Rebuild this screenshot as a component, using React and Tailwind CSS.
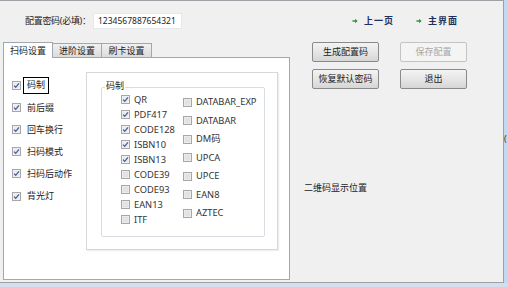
import React from 'react';

const FONT = "font-['Noto_Sans','Noto_Sans_CJK_SC',sans-serif]";

function Box({ checked }) {
  return (
    <svg width="9" height="9" viewBox="0 0 9 9" className="shrink-0">
      <rect x="0.5" y="0.5" width="8" height="8" fill="#f4f4f4" stroke="#a7a7a7" />
      <rect x="1.5" y="1.5" width="6" height="6" fill={checked ? '#e8ecf2' : '#e2e2e2'} />
      {checked && (
        <path d="M2 4.6 L3.7 6.3 L7 2.4" fill="none" stroke="#4c5f8f" strokeWidth="1.3" />
      )}
    </svg>
  );
}

function SideItem({ label, focus }) {
  return (
    <div className="h-[22.2px] flex items-center">
      <Box checked />
      <span
        className={
          'ml-[2px] px-[3px] h-[17px] flex items-center border ' +
          (focus ? 'border-black border-[1.5px]' : 'border-transparent')
        }
      >
        {label}
      </span>
    </div>
  );
}

function CodeItem({ label, checked, tall }) {
  return (
    <div className={(tall ? 'h-[18.5px]' : 'h-[15px]') + ' flex items-center gap-[4px]'}>
      <Box checked={checked} />
      <span className="text-[9.3px] text-[#333]">{label}</span>
    </div>
  );
}

function Btn({ children, disabled }) {
  return (
    <div
      className={
        'w-[67px] h-[20px] rounded-[2px] border flex items-center justify-center text-[9px] ' +
        (disabled
          ? 'border-[#c2c5c8] bg-[#f4f4f4] text-[#a8a8a8]'
          : 'border-[#8a8a8a] bg-gradient-to-b from-[#f3f3f3] via-[#e6e6e6] to-[#d6d6d6] text-[#222]')
      }
    >
      {children}
    </div>
  );
}

function NavLink({ label }) {
  return (
    <div className="flex items-center gap-[6px]">
      <svg width="6" height="6" viewBox="0 0 7 7">
        <path d="M0.5 2.6 H3.6 V0.8 L6.6 3.5 L3.6 6.2 V4.4 H0.5 Z" fill="#2f9a3a" />
      </svg>
      <span className="text-[9px] font-bold tracking-[1px] text-[#1f2f5c]">{label}</span>
    </div>
  );
}

const col1 = [
  ['QR', true],
  ['PDF417', true],
  ['CODE128', true],
  ['ISBN10', true],
  ['ISBN13', true],
  ['CODE39', false],
  ['CODE93', false],
  ['EAN13', false],
  ['ITF', false],
];
const col2 = ['DATABAR_EXP', 'DATABAR', 'DM码', 'UPCA', 'UPCE', 'EAN8', 'AZTEC'];
const side = ['码制', '前后缀', '回车换行', '扫码模式', '扫码后动作', '背光灯'];

export default function App() {
  return (
    <div className={'w-[508px] h-[287px] overflow-hidden flex bg-[#d3dfec] ' + FONT}>
      <div className="w-[504px] h-[283px] shrink-0 bg-[#f0f0f0] border-t border-r border-b border-[#9da1a6] flex flex-col text-[9px] text-[#222]">
        <div className="flex items-center h-[16px] mt-[12px]">
          <span className="ml-[25px] w-[68px] whitespace-nowrap tracking-[-0.3px]">配置密码(必填)：</span>
          <div className="w-[89px] h-[16px] bg-white border border-[#e4e8ec] flex items-center pl-[4px] text-[8.5px] text-[#222]">
            1234567887654321
          </div>
          <div className="ml-[170px] flex items-center gap-[22px]">
            <NavLink label="上一页" />
            <NavLink label="主界面" />
          </div>
        </div>

        <div className="flex mt-[13px]">
          <div className="ml-[3px] w-[287px] flex flex-col">
            <div className="flex h-[15px] items-end">
              <div className="w-[50px] h-[16px] -mb-px z-10 bg-white border border-b-0 border-[#a3a6ab] flex items-center justify-center">
                扫码设置
              </div>
              <div className="w-[49px] h-[14px] bg-gradient-to-b from-[#f0f0f0] to-[#dcdcdc] border border-l-0 border-b-0 border-[#a3a6ab] flex items-center justify-center">
                进阶设置
              </div>
              <div className="w-[50px] h-[14px] bg-gradient-to-b from-[#f0f0f0] to-[#dcdcdc] border border-l-0 border-b-0 border-[#a3a6ab] flex items-center justify-center">
                刷卡设置
              </div>
            </div>
            <div className="h-[223px] bg-white border border-[#a3a6ab] flex items-start">
              <div className="w-[82px] pl-[8px] pt-[16px] flex flex-col">
                {side.map((s, i) => (
                  <SideItem key={s} label={s} focus={i === 0} />
                ))}
              </div>
              <div className="mt-[14px] w-[192px] h-[178px] border border-[#d4d8dc] shadow-[1px_1px_1px_#eeeeee]">
                <div className="relative ml-[14px] mt-[14px] w-[164px] h-[150px] border border-[#d9dde2] rounded-[2px]">
                  <span className="absolute -top-[8px] left-[3px] bg-white px-[1px] leading-[12px]">码制</span>
                  <div className="flex">
                    <div className="w-[81px] pl-[19px] pt-[4px] flex flex-col">
                      {col1.map(([l, c]) => (
                        <CodeItem key={l} label={l} checked={c} />
                      ))}
                    </div>
                    <div className="pt-[5px] flex flex-col">
                      {col2.map((l) => (
                        <CodeItem key={l} label={l} checked={false} tall />
                      ))}
                    </div>
                  </div>
                </div>
              </div>
            </div>
          </div>

          <div className="ml-[14px] flex flex-col">
            <div className="ml-[8px] flex flex-col gap-[7px]">
              <div className="flex gap-[21px]">
                <Btn>生成配置码</Btn>
                <Btn disabled>保存配置</Btn>
              </div>
              <div className="flex gap-[21px]">
                <Btn>恢复默认密码</Btn>
                <Btn>退出</Btn>
              </div>
            </div>
            <span className="mt-[93px] leading-[12px]">二维码显示位置</span>
          </div>
        </div>
      </div>
      <div className="flex-1 h-[283px] bg-[#c4d8ef] flex items-center pb-[6px] text-[9px] text-[#333]">(</div>
    </div>
  );
}
